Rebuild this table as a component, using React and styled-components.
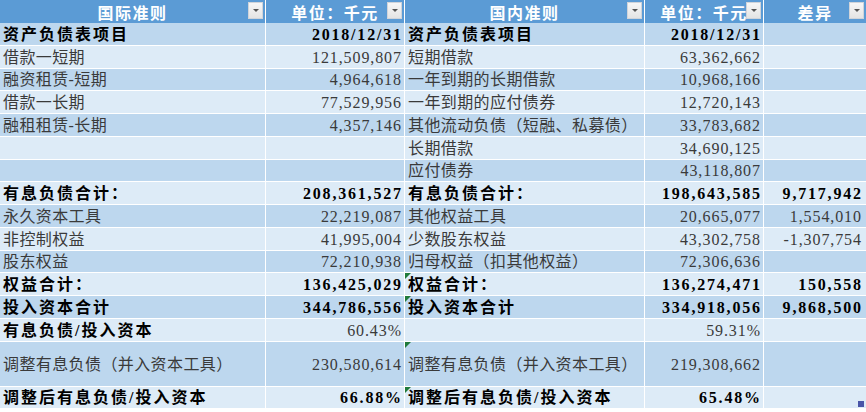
import React from "react";
import styled, { createGlobalStyle } from "styled-components";

const Global = createGlobalStyle`
  html, body { margin: 0; padding: 0; background: #ffffff; }
  body { font-family: "Liberation Serif", "Noto Sans CJK SC", serif; }
`;

const COLS = "265px 138px 239px 118px 102px";

const Table = styled.div`
  width: 866px;
  display: flex;
  flex-direction: column;
  gap: 1px;
  background: #ffffff;
`;

const Row = styled.div`
  display: grid;
  grid-template-columns: ${COLS};
  column-gap: 1px;
  height: ${(p) => (p.$tall ? "44px" : p.$head ? "22px" : "21.75px")};
`;

const HeadCell = styled.div`
  position: relative;
  background: #5b9bd5;
  color: #ffffff;
  font-weight: 700;
  font-size: 16px;
  letter-spacing: 1.5px;
  display: flex;
  align-items: center;
  justify-content: center;
  white-space: nowrap;
`;

const DropBtn = styled.span`
  position: absolute;
  right: 2px;
  top: 2px;
  width: 15px;
  height: 17px;
  box-sizing: border-box;
  background: linear-gradient(#f7f7f7, #e4e4e4);
  border: 1px solid #d0d4da;
  display: flex;
  align-items: center;
  justify-content: center;
  &::after {
    content: "";
    border-left: 3px solid transparent;
    border-right: 3px solid transparent;
    border-top: 3px solid #555;
  }
`;

const spacing = (p) => {
  if (p.$num) return p.$bold ? 1.8 : 0.9;
  return p.$bold ? 2 : 0.4;
};

const Cell = styled.div`
  position: relative;
  background: ${(p) => (p.$tone === "mid" ? "#bdd7ee" : "#ddebf7")};
  color: ${(p) => (p.$bold ? "#000000" : "#3a3a3a")};
  font-weight: ${(p) => (p.$bold ? 700 : 400)};
  font-size: 16px;
  line-height: 19px;
  letter-spacing: ${(p) => spacing(p)}px;
  display: flex;
  align-items: ${(p) => (p.$tall ? "center" : "flex-end")};
  justify-content: ${(p) => (p.$num ? "flex-end" : "flex-start")};
  padding-top: ${(p) => (p.$tall ? 3 : 0)}px;
  padding-bottom: 1px;
  padding-left: ${(p) => (p.$num ? 0 : 3)}px;
  padding-right: ${(p) => (p.$num ? (p.$pr || 3) - spacing(p) : 0)}px;
  white-space: nowrap;
  box-sizing: border-box;
`;

const Flag = styled.span`
  position: absolute;
  left: 0;
  top: 0;
  width: 0;
  height: 0;
  border-top: 6px solid #1f7a3a;
  border-right: 6px solid transparent;
`;

const Handle = styled.span`
  position: absolute;
  right: 2px;
  bottom: 1px;
  width: 6px;
  height: 6px;
  background: #4a55a8;
`;

const rows = [
  { bold: true, a: "资产负债表项目", b: "2018/12/31", c: "资产负债表项目", d: "2018/12/31" },
  { a: "借款一短期", b: "121,509,807", c: "短期借款", d: "63,362,662" },
  { a: "融资租赁-短期", b: "4,964,618", c: "一年到期的长期借款", d: "10,968,166" },
  { a: "借款一长期", b: "77,529,956", c: "一年到期的应付债券", d: "12,720,143" },
  { a: "融租租赁-长期", b: "4,357,146", c: "其他流动负债（短融、私募债）", d: "33,783,682" },
  { a: "", b: "", c: "长期借款", d: "34,690,125" },
  { a: "", b: "", c: "应付债券", d: "43,118,807" },
  { bold: true, a: "有息负债合计：", b: "208,361,527", c: "有息负债合计：", d: "198,643,585", e: "9,717,942" },
  { a: "永久资本工具", b: "22,219,087", c: "其他权益工具", d: "20,665,077", e: "1,554,010" },
  { a: "非控制权益", b: "41,995,004", c: "少数股东权益", d: "43,302,758", e: "-1,307,754" },
  { a: "股东权益", b: "72,210,938", c: "归母权益（扣其他权益）", d: "72,306,636" },
  { bold: true, flag: true, a: "权益合计：", b: "136,425,029", c: "权益合计：", d: "136,274,471", e: "150,558" },
  { bold: true, flag: true, a: "投入资本合计", b: "344,786,556", c: "投入资本合计", d: "334,918,056", e: "9,868,500" },
  { aBold: true, a: "有息负债/投入资本", b: "60.43%", c: "", d: "59.31%" },
  { tall: true, flag: true, a: "调整有息负债（并入资本工具）", b: "230,580,614", c: "调整有息负债（并入资本工具）", d: "219,308,662" },
  { bold: true, flag: true, last: true, a: "调整后有息负债/投入资本", b: "66.88%", c: "调整后有息负债/投入资本", d: "65.48%" },
];

const heads = ["国际准则", "单位：千元", "国内准则", "单位：千元", "差异"];

export default function App() {
  return (
    <>
      <Global />
      <Table>
        <Row $head>
          {heads.map((h, i) => (
            <HeadCell key={i}>
              {h}
              <DropBtn />
            </HeadCell>
          ))}
        </Row>
        {rows.map((r, i) => {
          const tone = i % 2 === 0 ? "mid" : "light";
          return (
            <Row key={i} $tall={r.tall}>
              <Cell $tone={tone} $tall={r.tall} $bold={r.bold || r.aBold}>{r.a}</Cell>
              <Cell $tone={tone} $tall={r.tall} $bold={r.bold} $num>{r.b}</Cell>
              <Cell $tone={tone} $tall={r.tall} $bold={r.bold}>
                {r.flag && <Flag />}
                {r.c}
              </Cell>
              <Cell $tone={tone} $tall={r.tall} $bold={r.bold} $num>{r.d}</Cell>
              <Cell $tone={tone} $tall={r.tall} $bold={r.bold} $num $pr={5}>
                {r.e || ""}
                {r.last && <Handle />}
              </Cell>
            </Row>
          );
        })}
      </Table>
    </>
  );
}
